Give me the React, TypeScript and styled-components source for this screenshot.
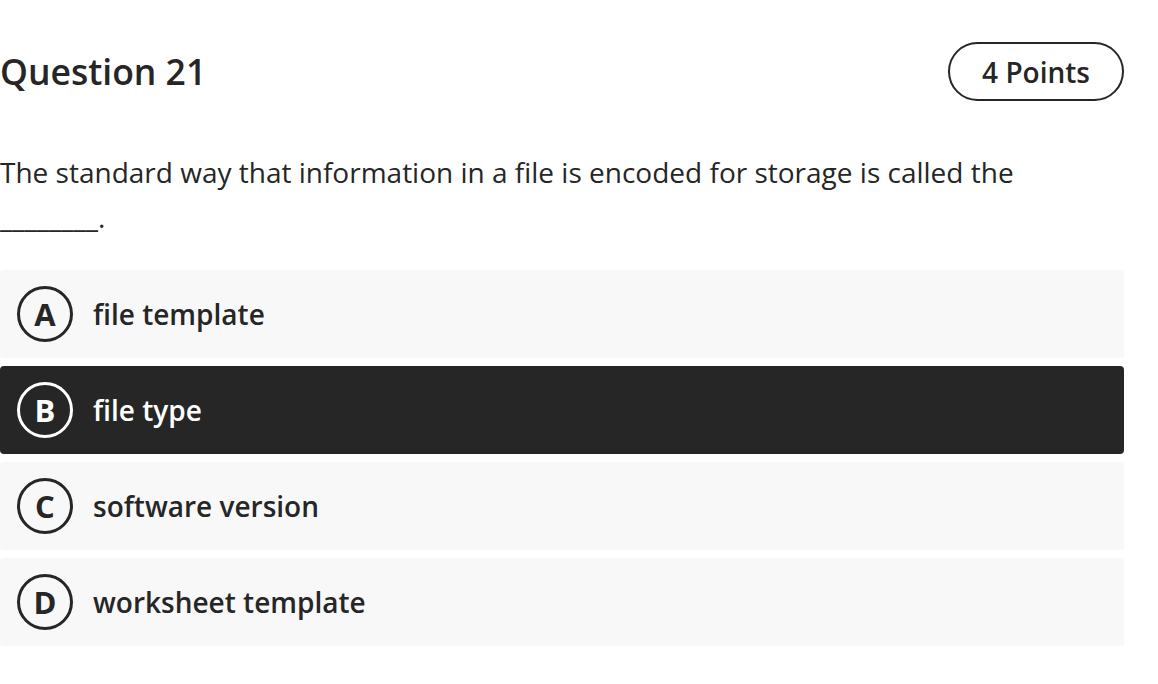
import React, { FC } from 'react'
import styled, { createGlobalStyle } from 'styled-components'

const GlobalStyle = createGlobalStyle`
    html, body {
        margin: 0;
        padding: 0;
        background: #ffffff;
        font-family: "Open Sans", "Noto Sans", sans-serif;
        color: #262626;
    }
`

const Page = styled.main`
    width: 1124px;
    padding-top: 42px;
`

const Header = styled.header`
    display: flex;
    justify-content: space-between;
    align-items: center;
    height: 59px;
`

const Title = styled.h1`
    margin: 0;
    font-size: 35.5px;
    font-weight: 600;
    line-height: 1.36;
`

const PointsPill = styled.div`
    box-sizing: border-box;
    height: 59px;
    padding: 0 32px;
    display: flex;
    align-items: center;
    border: 2px solid #262626;
    border-radius: 30px;
    font-size: 28px;
    font-weight: 600;
`

const Prompt = styled.p`
    margin: 49px 0 30px;
    max-width: 1110px;
    font-size: 28px;
    line-height: 45px;
    font-weight: 400;
`

const Options = styled.ul`
    list-style: none;
    margin: 0;
    padding: 0;
    display: flex;
    flex-direction: column;
    gap: 8px;
`

type OptionRowProps = {
    $selected?: boolean
}

const OptionRow = styled.li<OptionRowProps>`
    height: 88px;
    display: flex;
    align-items: center;
    gap: 20px;
    padding-left: 17px;
    border-radius: 4px;
    background: ${(props) => (props.$selected ? '#262626' : '#f8f8f8')};
    color: ${(props) => (props.$selected ? '#ffffff' : '#262626')};
    cursor: pointer;
`

const Badge = styled.span`
    box-sizing: border-box;
    width: 56px;
    height: 56px;
    flex: none;
    display: flex;
    align-items: center;
    justify-content: center;
    border: 3px solid currentColor;
    border-radius: 50%;
    font-size: 31px;
    font-weight: 700;
    line-height: 1;
`

const OptionText = styled.span`
    font-size: 28px;
    font-weight: 600;
`

const answers = [
    { key: 'A', text: 'file template' },
    { key: 'B', text: 'file type' },
    { key: 'C', text: 'software version' },
    { key: 'D', text: 'worksheet template' },
]

const App: FC = () => {
    const selected = 'B'

    return (
        <>
            <GlobalStyle />
            <Page>
                <Header>
                    <Title>Question 21</Title>
                    <PointsPill>4 Points</PointsPill>
                </Header>
                <Prompt>
                    The standard way that information in a file is encoded for storage is called the ________.
                </Prompt>
                <Options>
                    {answers.map((answer) => (
                        <OptionRow key={answer.key} $selected={answer.key === selected}>
                            <Badge>{answer.key}</Badge>
                            <OptionText>{answer.text}</OptionText>
                        </OptionRow>
                    ))}
                </Options>
            </Page>
        </>
    )
}

export default App
